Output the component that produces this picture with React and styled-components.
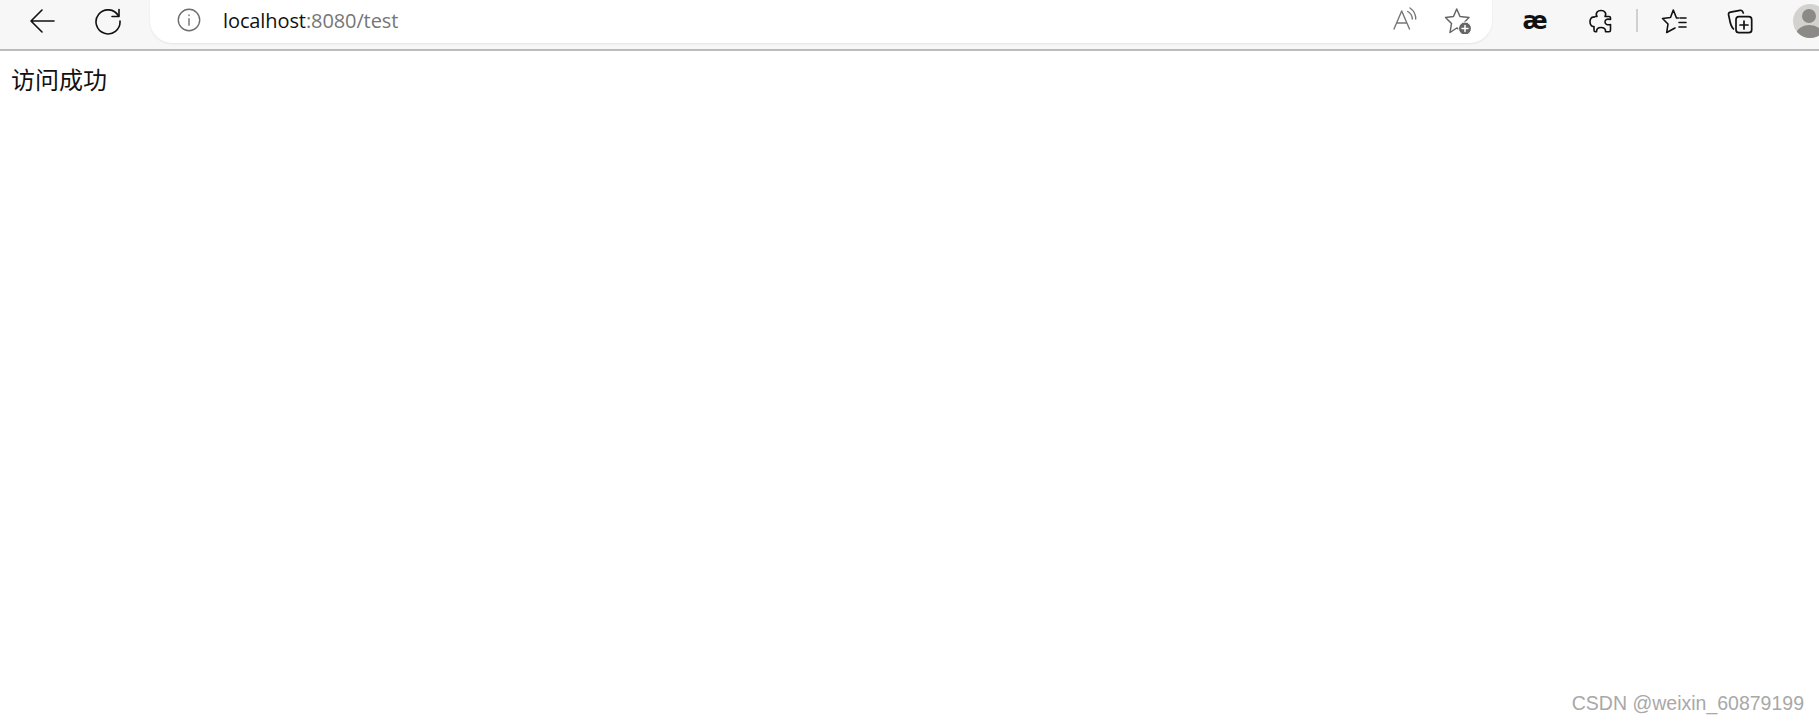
import React from 'react';
import styled, { createGlobalStyle } from 'styled-components';

const GlobalStyle = createGlobalStyle`
  html, body {
    margin: 0;
    padding: 0;
    background: #fff;
  }
`;

const Page = styled.div`
  position: relative;
  height: 722px;
  overflow: hidden;
  font-family: "Noto Sans CJK SC", "Liberation Sans", sans-serif;
`;

const Toolbar = styled.header`
  display: flex;
  align-items: flex-start;
  height: 49px;
  overflow: hidden;
  background: #f7f7f7;
  border-bottom: 2px solid #bcbcbc;
`;

const NavButton = styled.div`
  flex: none;
  width: ${(p) => p.$w}px;
  height: 41px;
  display: flex;
  align-items: center;
  justify-content: center;
  color: #111;
`;

const AddressBar = styled.div`
  flex: none;
  width: 1342px;
  height: 43px;
  box-sizing: border-box;
  margin-left: 18px;
  padding: 0 21px 3px 27px;
  display: flex;
  align-items: center;
  gap: 24px;
  background: #fff;
  border-radius: 0 0 22px 22px;
  box-shadow: 0 1px 2px rgba(0, 0, 0, 0.08);
`;

const Url = styled.div`
  flex: 1;
  margin-left: -2px;
  font: 20px "Open Sans", "Liberation Sans", sans-serif;
  letter-spacing: -0.1px;
  color: #111;
`;

const UrlDim = styled.span`
  color: #767676;
`;

const Ligature = styled.div`
  font: bold 24px "DejaVu Sans", sans-serif;
  color: #111;
  line-height: 1;
`;

const Separator = styled.div`
  flex: none;
  width: 2px;
  height: 23px;
  margin: 9px 0 0 12px;
  background: #d0d0d0;
`;

const Avatar = styled.div`
  position: relative;
  flex: none;
  width: 34px;
  height: 34px;
  margin: 4px 0 0 23px;
  border-radius: 50%;
  overflow: hidden;
  background: #d3d2cf;
`;

const AvatarHead = styled.div`
  position: absolute;
  left: 9px;
  top: 5px;
  width: 14px;
  height: 14px;
  border-radius: 50%;
  background: #8b8a87;
`;

const AvatarBody = styled.div`
  position: absolute;
  left: 3px;
  top: 21px;
  width: 27px;
  height: 20px;
  border-radius: 50%;
  background: #8b8a87;
`;

const Greeting = styled.div`
  padding: 11px 0 0 11px;
  font-size: 24px;
  line-height: 33px;
  color: #111;
`;

const Watermark = styled.div`
  position: absolute;
  right: 15px;
  bottom: 7px;
  font: 19.5px "Liberation Sans", sans-serif;
  color: #a8a8a8;
`;

const Icon = ({ size = 28, children, color = 'currentColor', width = 1.6 }) => (
  <svg width={size} height={size} viewBox="0 0 28 28" fill="none" stroke={color} strokeWidth={width} strokeLinecap="round" strokeLinejoin="round">
    {children}
  </svg>
);

const App = () => (
  <Page>
    <GlobalStyle />
    <Toolbar>
      <NavButton $w={84}>
        <Icon>
          <path d="M3 14 H26 M14 3 L3 14 L14 25" />
        </Icon>
      </NavButton>
      <NavButton $w={48}>
        <Icon>
          <path d="M24.5 9 A12 12 0 1 0 26 14" />
          <path d="M25 2.5 V9.5 H18" />
        </Icon>
      </NavButton>
      <AddressBar>
        <Icon size={24} color="#6e6e6e">
          <circle cx="14" cy="14" r="12.5" />
          <path d="M14 12.5 V20 M14 8 V8.8" />
        </Icon>
        <Url>
          localhost<UrlDim>:8080/test</UrlDim>
        </Url>
        <Icon color="#777" width={1.4}>
          <path d="M3 23 L10.7 5 L18.5 23 M5.8 17 H15.8" />
          <path d="M16.7 5.5 A9 9 0 0 1 21.3 13 M19 2 A13 13 0 0 1 24.7 13" />
        </Icon>
        <Icon color="#666" width={1.5}>
          <path d="M13.7 3 L17 10.5 L26 11.5 L20 17.5 L21.5 26 L13.7 22 L7 26.5 L8.5 17.5 L2.5 11.5 L10.5 10.5 Z" />
          <circle cx="22" cy="22.5" r="6.5" fill="#666" stroke="#fff" strokeWidth="1" />
          <path d="M22 19.5 V25.5 M19 22.5 H25" stroke="#fff" />
        </Icon>
      </AddressBar>
      <NavButton $w={86}>
        <Ligature>æ</Ligature>
      </NavButton>
      <NavButton $w={46}>
        <Icon>
          <path d="M10 9.5 C8 6 10.5 3.5 14 3.5 C17.5 3.5 20 6 18 9.5 H22 C23 9.5 23.5 10 23.5 11 V12.5 C20 11.5 18 12.5 18 14.7 C18 17 20 18.5 23.5 17.5 V23 C23.5 24 23 24.7 22 24.7 H18.5 C19 22 17 20.5 14 20.5 C11 20.5 9.5 22 9.5 24.7 H8.5 C7.5 24.7 7 24 7 23 V19.5 C4.5 20 3 17.5 3 14.7 C3 12 4.5 9.5 7 10.2 C7 9.7 7.5 9.5 8.5 9.5 Z" />
        </Icon>
      </NavButton>
      <Separator />
      <NavButton $w={72}>
        <Icon>
          <path d="M18.5 11 H16.5 L13.3 3 L10.5 10.5 L2.5 11.5 L8 17 L6.7 25.5 L15 21" />
          <path d="M19 15.5 H26 M19 20 H26 M20 11 H26" />
        </Icon>
      </NavButton>
      <NavButton $w={60}>
        <Icon width={1.7}>
          <path d="M7.5 22 C5.5 20 4.5 18 3.5 12 L2.6 8 C2.3 6.5 3 5.5 4.5 5.2 L14 3.3 C15.5 3 16.5 3.5 17.3 6" />
          <rect x="10" y="9.7" width="15.7" height="16" rx="3" />
          <path d="M18 14 V22 M14 18 H22" />
        </Icon>
      </NavButton>
      <Avatar>
        <AvatarHead />
        <AvatarBody />
      </Avatar>
    </Toolbar>
    <Greeting>访问成功</Greeting>
    <Watermark>CSDN @weixin_60879199</Watermark>
  </Page>
);

export default App;
